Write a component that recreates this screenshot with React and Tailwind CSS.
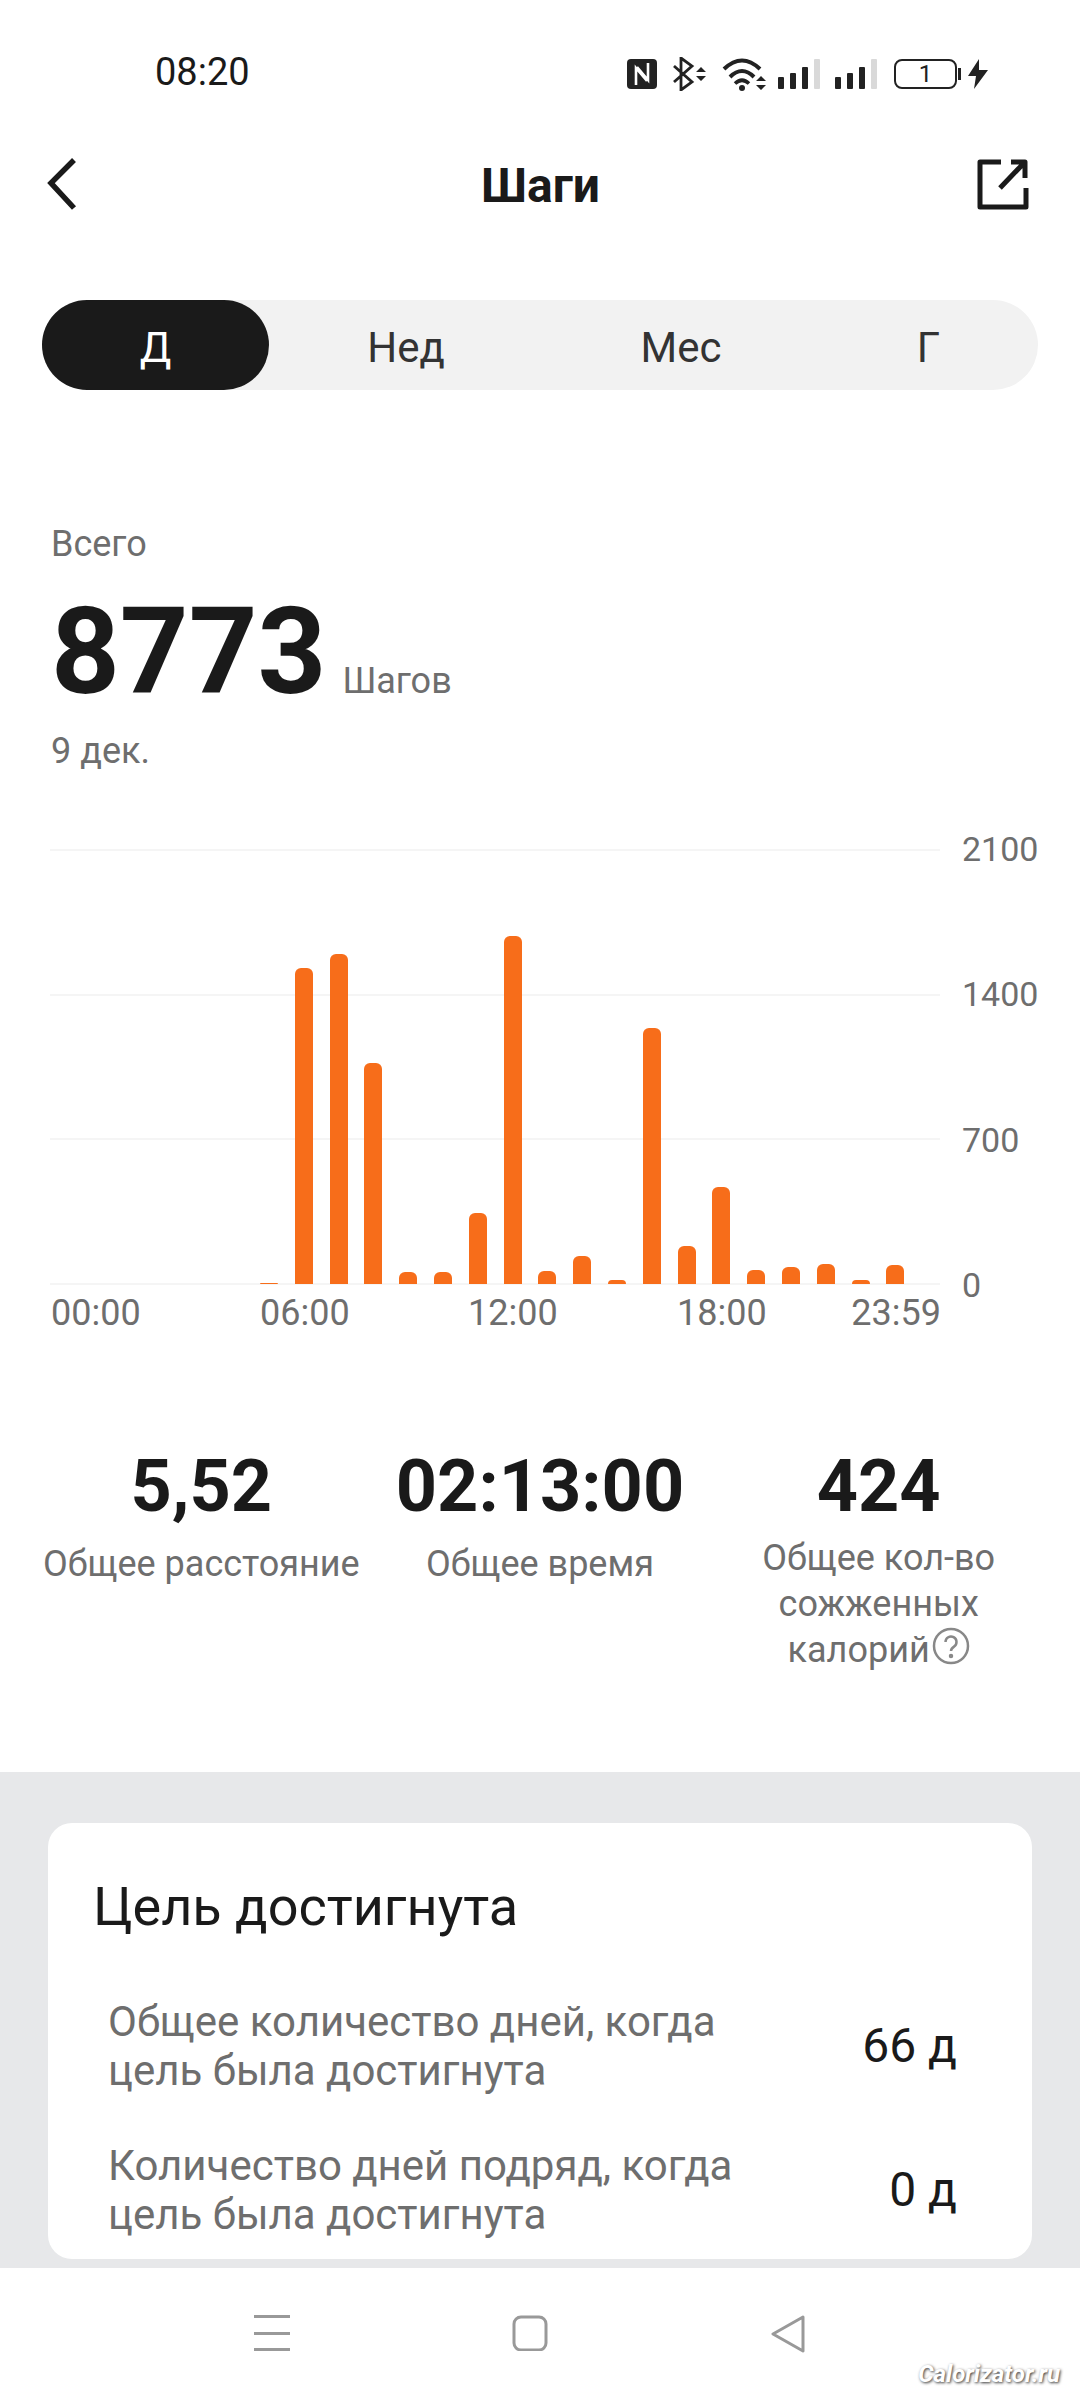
import React from "react";

const bars = [0, 0, 0, 0, 0, 1, 316, 330, 221, 12, 12, 71, 348, 13, 28, 4, 256, 38, 97, 14, 17, 20, 4, 19];
const yLabels = ["2100", "1400", "700", "0"];

function StatusIcons() {
  return (
    <div className="flex items-center">
      {/* NFC */}
      <svg width="30" height="30" viewBox="0 0 30 30">
        <rect width="30" height="30" rx="4" fill="#222" />
        <path d="M9 26V9l11 13M21 4v17L10 8" fill="none" stroke="#fff" strokeWidth="2.6" />
      </svg>
      {/* Bluetooth */}
      <svg width="34" height="34" viewBox="0 0 34 34" className="ml-[16px]">
        <path d="M1 9l18 16-11 8V1l11 8L1 25" fill="none" stroke="#222" strokeWidth="2.8" />
        <path d="M23 15l5-5 5 5zM23 19l5 5 5-5z" fill="#222" />
      </svg>
      {/* Wifi */}
      <svg width="46" height="34" viewBox="0 0 46 34" className="ml-[15px]">
        <path d="M2 12Q20 -5 38 12" fill="none" stroke="#222" strokeWidth="4" />
        <path d="M8 20Q20 8 32 20" fill="none" stroke="#222" strokeWidth="4" />
        <path d="M13 26.5Q20 20 27 26.5" fill="none" stroke="#222" strokeWidth="3.6" />
        <circle cx="20" cy="31" r="3" fill="#222" />
        <path d="M34 24l5-5 5 5zM34 28l5 5 5-5z" fill="#222" />
      </svg>
      {[0, 1].map((i) => (
        <svg key={i} width="43" height="30" viewBox="0 0 43 30" className={i === 0 ? "ml-[10px]" : "ml-[14px]"}>
          <rect x="0" y="18" width="6" height="12" rx="1" fill="#222" />
          <rect x="12" y="14" width="6" height="16" rx="1" fill="#222" />
          <rect x="24" y="8" width="6" height="22" rx="1" fill="#222" />
          <rect x="36" y="0" width="6" height="30" rx="1" fill="#d9d9d9" />
        </svg>
      ))}
      {/* Battery */}
      <div className="ml-[16px] flex items-center">
        <div className="w-[63px] h-[30px] rounded-[8px] border-2 border-[#222] flex items-center justify-center text-[24px] leading-none text-[#222]">
          1
        </div>
        <div className="w-[3px] h-[12px] bg-[#222] ml-[1px]" />
      </div>
      <svg width="20" height="30" viewBox="0 0 20 30" className="ml-[7px]">
        <path d="M11 0L0 17h8l-2 13 14-19h-9z" fill="#222" />
      </svg>
    </div>
  );
}

function Stat({ value, labelClass, children }) {
  return (
    <div className="flex flex-col items-center text-center">
      <div className="text-[72px] leading-[84px] font-bold text-[#1a1a1a]">{value}</div>
      <div className={`text-[36px] leading-[46px] text-[#6e6e6e] ${labelClass}`}>{children}</div>
    </div>
  );
}

function GoalRow({ text, value }) {
  return (
    <div className="flex items-center justify-between pl-[60px] pr-[75px]">
      <div className="text-[42px] leading-[49px] text-[#6e6e6e] w-[650px]">{text}</div>
      <div className="text-[48px] leading-[54px] text-[#1a1a1a]">{value}</div>
    </div>
  );
}

export default function App() {
  return (
    <div className="w-[1080px] h-[2400px] flex flex-col overflow-hidden bg-white font-['Roboto',sans-serif]">
      {/* Status bar */}
      <div className="h-[144px] shrink-0 flex items-start justify-between pt-[52px] pl-[155px] pr-[92px]">
        <span className="text-[38px] leading-[40px] text-[#1a1a1a]">08:20</span>
        <div className="mt-[5px]">
          <StatusIcons />
        </div>
      </div>

      {/* Header */}
      <div className="h-[80px] shrink-0 flex items-center justify-between pl-[47px] pr-[50px]">
        <svg width="30" height="54" viewBox="0 0 30 54" fill="none" stroke="#1a1a1a" strokeWidth="5.5">
          <path d="M27 3L4 26l23 25" />
        </svg>
        <span className="text-[48px] font-bold text-[#1a1a1a] pt-[3px] ml-[28px]">Шаги</span>
        <svg width="54" height="54" viewBox="0 0 54 54" fill="none" stroke="#1a1a1a" strokeWidth="5" strokeLinejoin="round">
          <path d="M25 5H4v45h46V31" />
          <path d="M35 5h14v16M24 31L47 7" />
        </svg>
      </div>

      {/* Period tabs */}
      <div className="mt-[76px] mx-[42px] h-[90px] shrink-0 rounded-full bg-[#f2f2f2] flex items-center text-[42px] text-[#333]">
        <div className="w-[227px] h-full rounded-full bg-[#1a1a1a] text-white flex items-center justify-center pt-[5px]">Д</div>
        <div className="w-[274px] text-center pt-[5px]">Нед</div>
        <div className="w-[276px] text-center pt-[5px]">Мес</div>
        <div className="w-[219px] text-center pt-[5px]">Г</div>
      </div>

      {/* Total */}
      <div className="pl-[51px] pt-[134px] shrink-0">
        <div className="text-[36px] leading-[40px] text-[#6e6e6e]">Всего</div>
        <div className="flex items-baseline mt-[23px]">
          <span className="text-[120px] leading-[130px] font-bold text-[#1a1a1a]">8773</span>
          <span className="ml-[16px] text-[36px] text-[#6e6e6e]">Шагов</span>
        </div>
        <div className="mt-[14px] text-[36px] leading-[40px] text-[#6e6e6e]">9 дек.</div>
      </div>

      {/* Chart */}
      <div className="mt-[78px] ml-[50px] mr-[42px] relative h-[470px] shrink-0">
        <div className="absolute left-0 top-0 w-[890px] h-[436px] flex flex-col justify-between">
          {yLabels.map((l) => (
            <div key={l} className="h-[2px] bg-[#f5f5f5]" />
          ))}
        </div>
        <div className="absolute left-[912px] top-[-20px] h-[476px] flex flex-col justify-between text-[34px] leading-[40px] text-[#6e6e6e]">
          {yLabels.map((l) => (
            <span key={l}>{l}</span>
          ))}
        </div>
        <div className="absolute left-[36px] top-0 h-[435px] flex items-end gap-[16.8px]">
          {bars.map((h, i) => (
            <div key={i} className="w-[18px] bg-[#f76d1a] rounded-t-[6px]" style={{ height: h }} />
          ))}
        </div>
        <div className="absolute left-[1px] top-[444px] w-[890px] flex text-[36px] leading-[40px] text-[#6e6e6e]">
          <span className="w-[209px]">00:00</span>
          <span className="w-[208px]">06:00</span>
          <span className="w-[209px]">12:00</span>
          <span className="flex-1">18:00</span>
          <span>23:59</span>
        </div>
      </div>

      {/* Totals */}
      <div className="mt-[126px] px-[32px] grid grid-cols-3 shrink-0">
        <Stat value="5,52" labelClass="mt-[12px]">Общее расстояние</Stat>
        <Stat value="02:13:00" labelClass="mt-[12px]">Общее время</Stat>
        <Stat value="424" labelClass="mt-[6px]">
          Общее кол-во сожженных
          <br />
          калорий
          <svg width="38" height="38" viewBox="0 0 38 38" className="inline-block align-top ml-[2px]" fill="none" stroke="#888" strokeWidth="2.5">
            <circle cx="19" cy="19" r="17" />
            <path d="M13.5 15a5.5 5.5 0 1 1 8.5 4.6c-2 1.3-3 2.2-3 4.4" />
            <circle cx="19" cy="29" r="1" fill="#888" />
          </svg>
        </Stat>
      </div>

      {/* Goal card */}
      <div className="mt-[99px] h-[496px] shrink-0 bg-[#e7e8ea] pt-[51px] px-[48px]">
        <div className="bg-white rounded-[24px] h-[436px] flex flex-col">
          <div className="pl-[45px] pt-[52px] text-[54px] leading-[64px] text-[#1a1a1a]">Цель достигнута</div>
          <div className="mt-[58px] flex flex-col gap-[46px]">
            <GoalRow text="Общее количество дней, когда цель была достигнута" value="66 д" />
            <GoalRow text="Количество дней подряд, когда цель была достигнута" value="0 д" />
          </div>
        </div>
      </div>

      {/* Navigation bar */}
      <div className="relative flex-1 flex items-start pt-[47px] pl-[254px]">
        <svg width="36" height="36" viewBox="0 0 36 36" fill="#999">
          <rect y="0" width="36" height="3" />
          <rect y="17" width="36" height="3" />
          <rect y="33" width="36" height="3" />
        </svg>
        <svg width="36" height="36" viewBox="0 0 36 36" fill="none" stroke="#999" strokeWidth="3" className="ml-[222px]">
          <rect x="2" y="2" width="32" height="33" rx="7" />
        </svg>
        <svg width="36" height="38" viewBox="0 0 36 38" fill="none" stroke="#999" strokeWidth="3" strokeLinejoin="round" className="ml-[222px]">
          <path d="M33 2L3 19l30 17z" />
        </svg>
        <span className="absolute right-[20px] bottom-[8px] text-[24px] italic font-bold text-white [text-shadow:1px_1px_3px_#333]">
          Calorizator.ru
        </span>
      </div>
    </div>
  );
}
